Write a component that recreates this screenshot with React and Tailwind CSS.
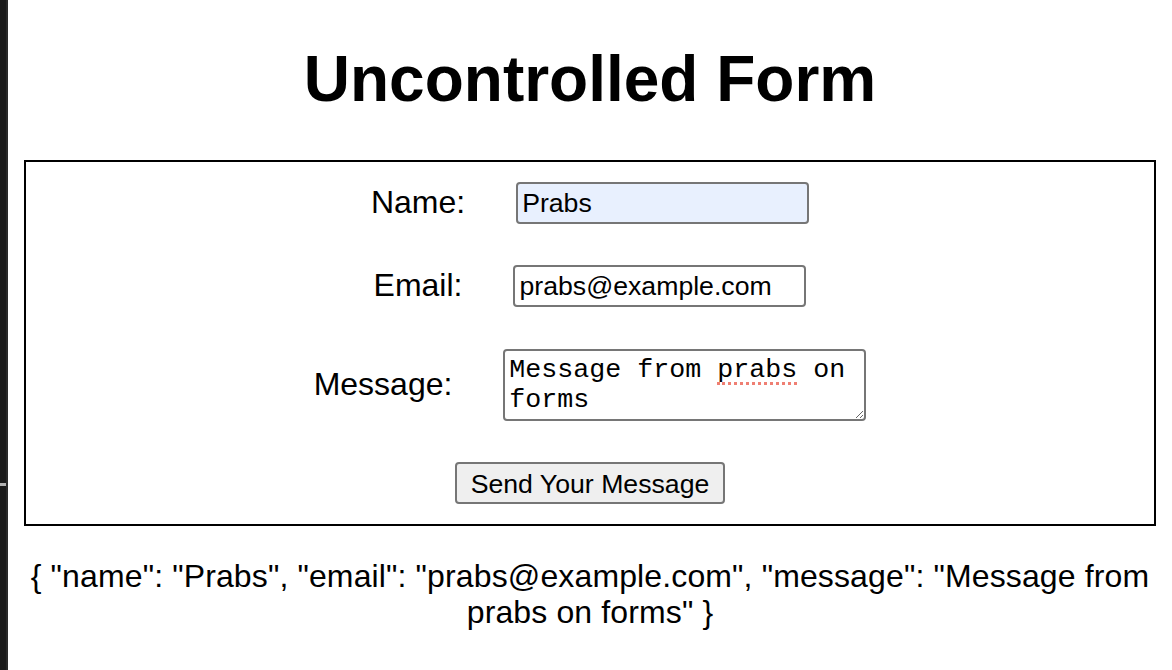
import { useRef } from 'react';

export default function App() {
  const nameRef = useRef(null);
  const emailRef = useRef(null);
  const messageRef = useRef(null);

  return (
    <div className="flex min-h-screen bg-white text-black font-['Liberation_Sans',Arial,Helvetica,sans-serif]">
      {/* Edge of the dark window behind */}
      <div className="w-[8px] shrink-0 flex flex-col bg-[#1b1b1b] border-r-2 border-[#2a2a2a]">
        <div className="h-[483px]" />
        <div className="h-[3px] bg-[#b3b3b3]" />
      </div>

      <main className="flex-1 px-4">
        <h1 className="text-center text-[64px] font-bold leading-[73.6px] pt-[43px] pb-[43px]">
          Uncontrolled Form
        </h1>

        <form
          className="border-2 border-black p-5 flex flex-col items-center gap-[41px]"
          onSubmit={(e) => e.preventDefault()}
        >
          {/* Name */}
          <div className="flex items-center gap-[51px]">
            <label htmlFor="name" className="text-[32px] leading-[37px]">Name:</label>
            <input
              id="name"
              ref={nameRef}
              type="text"
              defaultValue="Prabs"
              className="w-[293px] h-[42px] px-[4px] pt-px rounded-[4px] border-2 border-[#767676] bg-[#e8f0fe] text-[26.67px] outline-none"
            />
          </div>

          {/* Email */}
          <div className="flex items-center gap-[51px]">
            <label htmlFor="email" className="text-[32px] leading-[37px]">Email:</label>
            <input
              id="email"
              ref={emailRef}
              type="email"
              defaultValue="prabs@example.com"
              className="w-[293px] h-[42px] px-[4px] pt-px rounded-[4px] border-2 border-[#767676] bg-white text-[26.67px] outline-none"
            />
          </div>

          {/* Message */}
          <div className="flex items-center gap-[51px] mt-px">
            <label htmlFor="message" className="text-[32px] leading-[37px]">Message:</label>
            <div className="relative">
              <textarea
                id="message"
                ref={messageRef}
                spellCheck={false}
                defaultValue="Message from prabs on forms"
                className="block w-[363px] h-[72px] p-[4px] rounded-[4px] border-2 border-[#767676] bg-white text-[26.67px] leading-[30px] font-['Liberation_Mono','Courier_New',monospace] resize outline-none"
              />
              {/* spell-check squiggle under "prabs" */}
              <span className="absolute left-[214px] top-[33px] w-[80px] h-[3px] border-b-[3px] border-dotted border-[#ef7f73]" />
            </div>
          </div>

          <button
            type="submit"
            className="h-[42px] px-[14px] rounded-[4px] border-2 border-[#767676] bg-[#efefef] text-[26.67px]"
          >
            Send Your Message
          </button>
        </form>

        <p className="mt-8 text-center text-[32px] leading-[36.8px] tracking-[0.13px]">
          {'{ "name": "Prabs", "email": "prabs@example.com", "message": "Message from prabs on forms" }'}
        </p>
      </main>
    </div>
  );
}
